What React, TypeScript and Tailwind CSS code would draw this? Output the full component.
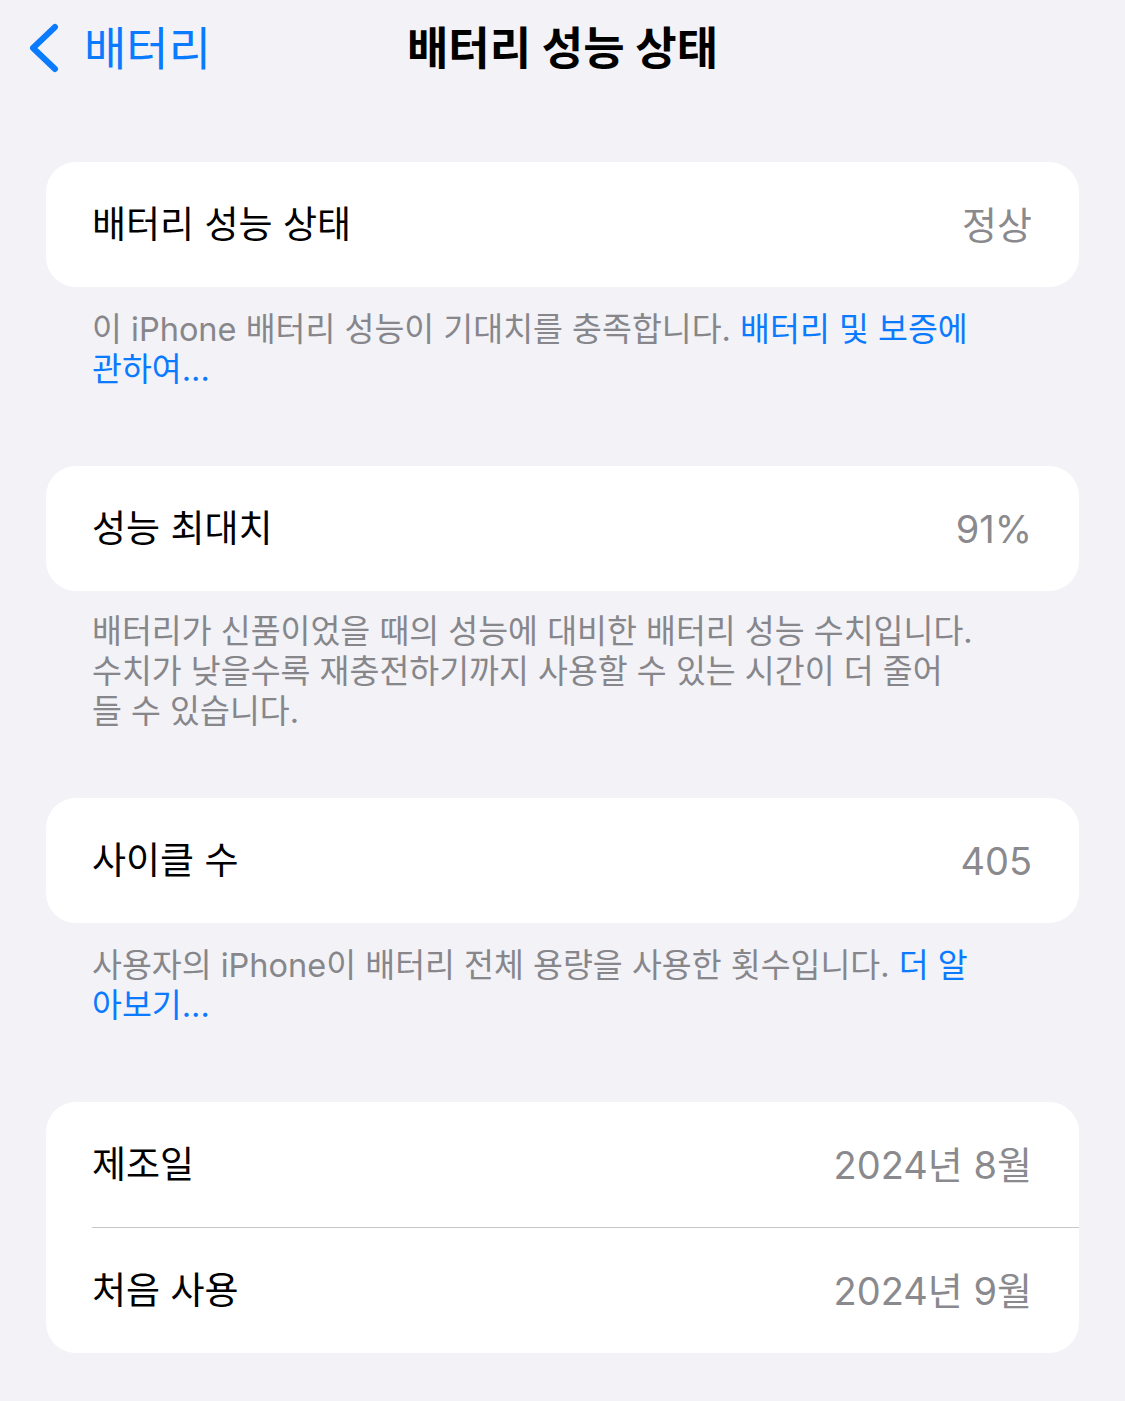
const font = { fontFamily: '"Inter", "Noto Sans CJK KR", sans-serif' };

function Row({ label, value }: { label: string; value: string }) {
  return (
    <div className="flex h-[125px] items-center justify-between pl-[46px] pr-[47px]">
      <span className="text-[37px] leading-none text-black">{label}</span>
      <span className="text-[38px] leading-none text-[#8a8a8e]">{value}</span>
    </div>
  );
}

function Card({ children }: { children: React.ReactNode }) {
  return <div className="overflow-hidden rounded-[30px] bg-white">{children}</div>;
}

export default function App() {
  return (
    <div style={font} className="min-h-[1401px] w-full bg-[#f2f2f7] antialiased">
      <header className="grid h-[96px] grid-cols-[1fr_auto_1fr] items-center">
        <button className="flex items-center gap-[24px] pl-[26px] text-[#0a7aff]">
          <svg width="34" height="50" viewBox="0 0 34 50" fill="none">
            <path d="M29 4 L7 25 L29 46" stroke="#0a7aff" strokeWidth="6" strokeLinecap="round" strokeLinejoin="round" />
          </svg>
          <span className="text-[46px] leading-none">배터리</span>
        </button>
        <h1 className="text-[45px] font-bold leading-none text-black">배터리 성능 상태</h1>
        <div />
      </header>

      <main className="px-[46px] pt-[66px]">
        <Card>
          <Row label="배터리 성능 상태" value="정상" />
        </Card>
        <p className="mb-[76px] mt-[23px] whitespace-nowrap pl-[46px] text-[32.5px] leading-[40px] text-[#86868b]">
          이 iPhone 배터리 성능이 기대치를 충족합니다. <span className="text-[#0a7aff]">배터리 및 보증에</span>
          <br />
          <span className="text-[#0a7aff]">관하여...</span>
        </p>

        <Card>
          <Row label="성능 최대치" value="91%" />
        </Card>
        <p className="mb-[66px] mt-[21px] whitespace-nowrap pl-[46px] text-[32.5px] leading-[40px] text-[#86868b]">
          배터리가 신품이었을 때의 성능에 대비한 배터리 성능 수치입니다.
          <br />
          수치가 낮을수록 재충전하기까지 사용할 수 있는 시간이 더 줄어
          <br />
          들 수 있습니다.
        </p>

        <Card>
          <Row label="사이클 수" value="405" />
        </Card>
        <p className="mb-[76px] mt-[23px] whitespace-nowrap pl-[46px] text-[32.5px] leading-[40px] text-[#86868b]">
          사용자의 iPhone이 배터리 전체 용량을 사용한 횟수입니다. <span className="text-[#0a7aff]">더 알</span>
          <br />
          <span className="text-[#0a7aff]">아보기...</span>
        </p>

        <Card>
          <Row label="제조일" value="2024년 8월" />
          <div className="ml-[46px] h-px bg-[#c6c6c8]" />
          <Row label="처음 사용" value="2024년 9월" />
        </Card>
      </main>
    </div>
  );
}
